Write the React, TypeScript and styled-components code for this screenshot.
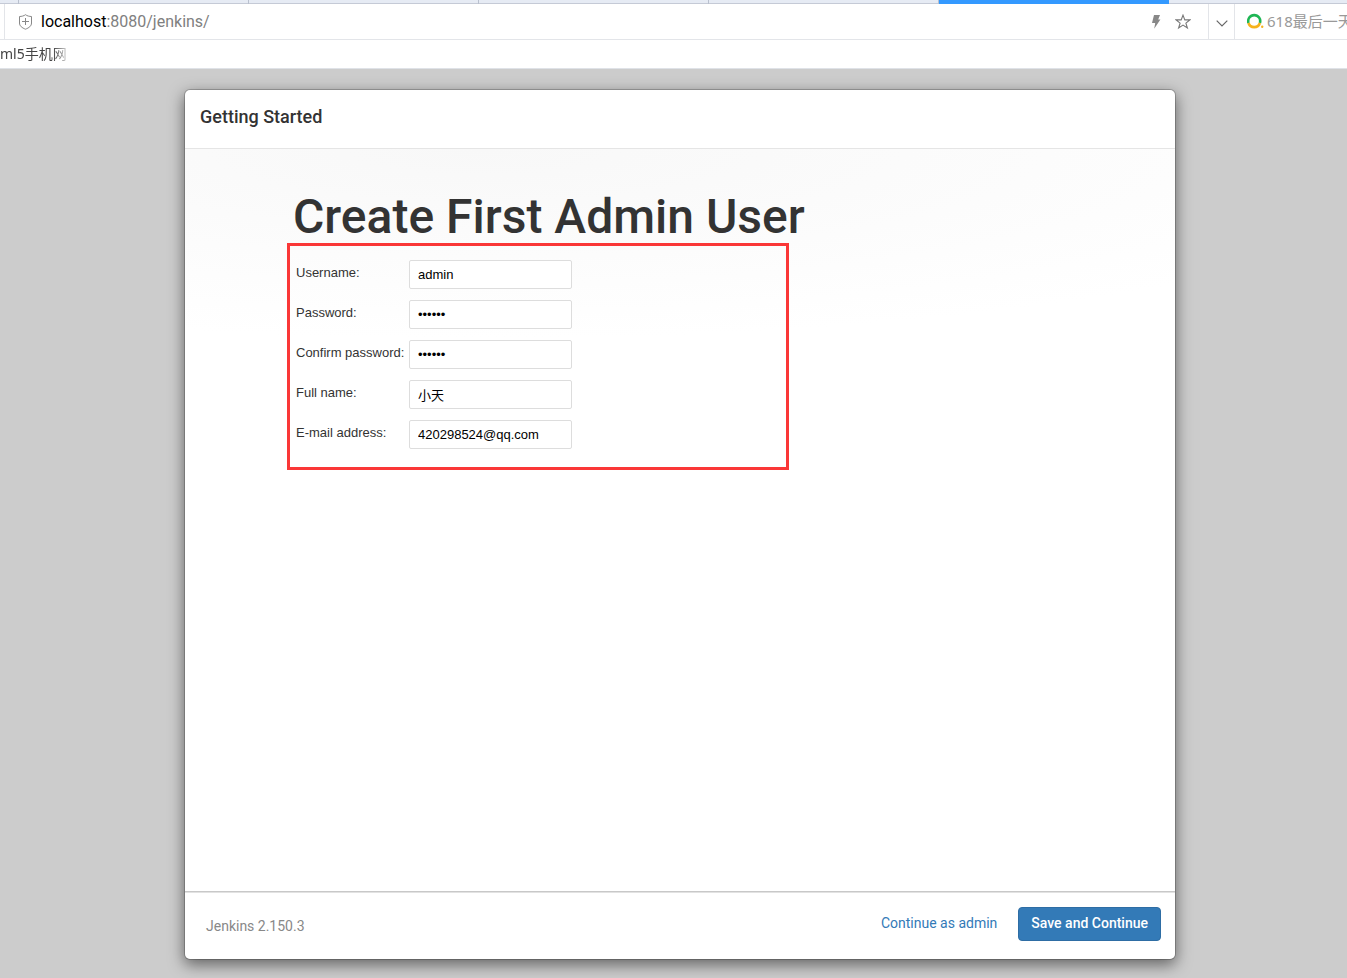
import React from "react";
import styled, { createGlobalStyle } from "styled-components";

const GlobalStyle = createGlobalStyle`
  *, *::before, *::after { box-sizing: border-box; }
  body { margin: 0; background: #ccc; font-family: Roboto, sans-serif; color: #333; }
`;

const chromeFont = `"Noto Sans", "Noto Sans CJK SC", sans-serif`;

const Page = styled.div`
  min-height: 100vh;
  display: flex;
  flex-direction: column;
`;

const TabStrip = styled.div`
  height: 4px;
  flex: none;
  display: flex;
  padding-left: 18px;
  background: linear-gradient(#e6ebf4 3px, #c5cad6 3px);
  overflow: hidden;
`;

const Tab = styled.div<{ $active?: boolean }>`
  flex: 0 0 230px;
  height: 4px;
  border-left: 1px solid #b9c0ce;
  background: ${(p) => (p.$active ? "#3399ff" : "transparent")};

  &:last-child {
    flex-basis: 231px;
  }
`;

const Toolbar = styled.header`
  height: 36px;
  flex: none;
  display: flex;
  align-items: stretch;
  padding-left: 4px;
  background: #fff;
  border-bottom: 1px solid #e3e5e9;
  font-family: ${chromeFont};
  font-size: 15px;
  overflow: hidden;
`;

const AddressBar = styled.div`
  flex: 1;
  display: flex;
  align-items: center;
  border-left: 1px solid #e3e5e9;
  padding: 0 17px 0 13px;
`;

const Url = styled.span`
  flex: 1;
  margin-left: 8px;
  font-family: Roboto, sans-serif;
  font-size: 16px;
  line-height: 20px;
  color: #808080;
`;

const Host = styled.span`
  color: #000;
`;

const IconButton = styled.button`
  display: flex;
  align-items: center;
  justify-content: center;
  padding: 0;
  margin-left: 14px;
  border: 0;
  background: none;
`;

const DropButton = styled(IconButton)`
  width: 27px;
  margin: 0;
  padding-top: 4px;
  border: solid #e3e5e9;
  border-width: 0 1px;
`;

const SearchBox = styled.div`
  width: 112px;
  display: flex;
  align-items: center;
  gap: 3px;
  padding: 0 0 2px 12px;
  color: #999;
  white-space: nowrap;
  overflow: hidden;

  svg { flex: none; }
`;

const Bookmarks = styled.nav`
  height: 29px;
  flex: none;
  display: flex;
  align-items: center;
  background: #fff;
  border-bottom: 1px solid #dfe2e7;
  font-family: ${chromeFont};
  font-size: 14px;
`;

const Bookmark = styled.a`
  padding-right: 4px;
  color: #444;
  text-decoration: none;
  white-space: nowrap;
  line-height: 20px;
  mask-image: linear-gradient(to right, #000 75%, transparent);
`;

const Stage = styled.main`
  flex: 1;
  display: flex;
  justify-content: center;
  padding: 20px 0 18px 13px;
`;

const Dialog = styled.section`
  width: 992px;
  max-width: 100%;
  display: flex;
  flex-direction: column;
  background: #fff;
  background-clip: padding-box;
  border: 1px solid rgba(0, 0, 0, 0.2);
  border-radius: 6px;
  box-shadow: 0 5px 15px rgba(0, 0, 0, 0.5);
`;

const DialogHeader = styled.div`
  height: 59px;
  padding: 14px 15px;
  border-bottom: 1px solid #e5e5e5;
`;

const DialogTitle = styled.h4`
  margin: 0;
  font-size: 18px;
  font-weight: 500;
  line-height: 26px;
`;

const DialogBody = styled.div`
  flex: 1;
  padding: 41px 102px 20px;
  background: radial-gradient(ellipse 100% 190px at 30% 0, #f8f8f8, #fff) no-repeat;
`;

const Heading = styled.h1`
  margin: 0;
  padding-left: 6px;
  font-size: 48px;
  font-weight: 500;
  line-height: 53px;
`;

const UserForm = styled.form`
  width: 502px;
  max-width: 100%;
  height: 227px;
  padding: 14px 6px;
  border: 3px solid #fa3737;
  font-family: "Liberation Sans", "Noto Sans CJK SC", sans-serif;
  font-size: 13px;
`;

const Field = styled.div`
  display: grid;
  grid-template-columns: 113px 163px;
  height: 29px;
  margin-bottom: 11px;
`;

const Label = styled.label`
  line-height: 26px;
  white-space: nowrap;
`;

const TextInput = styled.input`
  min-width: 0;
  height: 29px;
  padding: 0 8px;
  border: 1px solid #ddd;
  border-radius: 2px;
  background: #fff;
  color: #000;
  font: inherit;
`;

const DialogFooter = styled.footer`
  height: 68px;
  display: flex;
  align-items: center;
  padding: 0 14px 4px 21px;
  border-top: 1px solid #c8c8c8;
  box-shadow: inset 0 1px 0 #e2e2e2;
`;

const Version = styled.span`
  flex: 1;
  padding-top: 4px;
  font-size: 14px;
  color: #888;
`;

const ActionButton = styled.button<{ $primary?: boolean }>`
  height: 34px;
  padding: 0 12px 2px;
  margin-left: 8px;
  border: 1px solid ${(p) => (p.$primary ? "#2e6da4" : "transparent")};
  border-radius: 4px;
  background: ${(p) => (p.$primary ? "#337ab7" : "transparent")};
  color: ${(p) => (p.$primary ? "#fff" : "#337ab7")};
  font-family: inherit;
  font-size: 14px;
  font-weight: ${(p) => (p.$primary ? 500 : 400)};
`;

const fields = [
  { id: "username", label: "Username:", type: "text", value: "admin" },
  { id: "password1", label: "Password:", type: "password", value: "secret" },
  { id: "password2", label: "Confirm password:", type: "password", value: "secret" },
  { id: "fullname", label: "Full name:", type: "text", value: "小天" },
  { id: "email", label: "E-mail address:", type: "text", value: "420298524@qq.com" },
];

const ShieldIcon = () => (
  <svg width="15" height="16" viewBox="0 0 15 16" fill="none" stroke="#888" strokeWidth="1">
    <path d="M7.5.7 C6 1.9 3.5 2.5 1.5 2.5 V9 C1.5 12 4 13.8 7.5 15.2 C11 13.8 13.5 12 13.5 9 V2.5 C11.5 2.5 9 1.9 7.5.7Z" />
    <path d="M4 7.5h7M7.5 4v7" />
  </svg>
);

const BoltIcon = () => (
  <svg width="10" height="14" viewBox="0 0 10 14" fill="#888">
    <path d="M3 0h6L7.2 4.5H9.4L3.2 13.8 4.2 8H1z" />
  </svg>
);

const StarIcon = () => (
  <svg width="16" height="16" viewBox="0 0 16 16" fill="none" stroke="#777" strokeWidth="1.1">
    <path d="M8 1.1 9.8 5.9h5l-3.9 3.2 1.5 4.9L8 11.1 3.6 14l1.5-4.9L1.2 5.9h5z" />
  </svg>
);

const ChevronIcon = () => (
  <svg width="12" height="7" viewBox="0 0 12 7" fill="none" stroke="#666" strokeWidth="1.2">
    <path d="M.7.7 6 6 11.3.7" />
  </svg>
);

const SearchLogo = () => (
  <svg width="17" height="16" viewBox="0 0 17 16" fill="none" strokeWidth="2.6">
    <path d="M1.5 10A6 6 0 1 1 12.9 10" stroke="#1fb655" />
    <path d="M1.5 10A6 6 0 0 0 12.9 10" stroke="#f6b31c" />
    <circle cx="15.2" cy="13.8" r="1.2" fill="#f6b31c" />
  </svg>
);

export default function App() {
  return (
    <Page>
      <GlobalStyle />
      <TabStrip>
        <Tab />
        <Tab />
        <Tab />
        <Tab />
        <Tab $active />
      </TabStrip>
      <Toolbar>
        <AddressBar>
          <ShieldIcon />
          <Url>
            <Host>localhost</Host>:8080/jenkins/
          </Url>
          <IconButton type="button" aria-label="Speed mode">
            <BoltIcon />
          </IconButton>
          <IconButton type="button" aria-label="Add to favorites">
            <StarIcon />
          </IconButton>
        </AddressBar>
        <DropButton type="button" aria-label="History">
          <ChevronIcon />
        </DropButton>
        <SearchBox>
          <SearchLogo />
          <span>618最后一天</span>
        </SearchBox>
      </Toolbar>
      <Bookmarks>
        <Bookmark href="#">ml5手机网</Bookmark>
      </Bookmarks>
      <Stage>
        <Dialog aria-labelledby="dialog-title">
          <DialogHeader>
            <DialogTitle id="dialog-title">Getting Started</DialogTitle>
          </DialogHeader>
          <DialogBody>
            <Heading>Create First Admin User</Heading>
            <UserForm id="user-form" onSubmit={(e) => e.preventDefault()}>
              {fields.map((f) => (
                <Field key={f.id}>
                  <Label htmlFor={f.id}>{f.label}</Label>
                  <TextInput id={f.id} name={f.id} type={f.type} defaultValue={f.value} />
                </Field>
              ))}
            </UserForm>
          </DialogBody>
          <DialogFooter>
            <Version>Jenkins 2.150.3</Version>
            <ActionButton type="button">Continue as admin</ActionButton>
            <ActionButton type="submit" form="user-form" $primary>
              Save and Continue
            </ActionButton>
          </DialogFooter>
        </Dialog>
      </Stage>
    </Page>
  );
}
